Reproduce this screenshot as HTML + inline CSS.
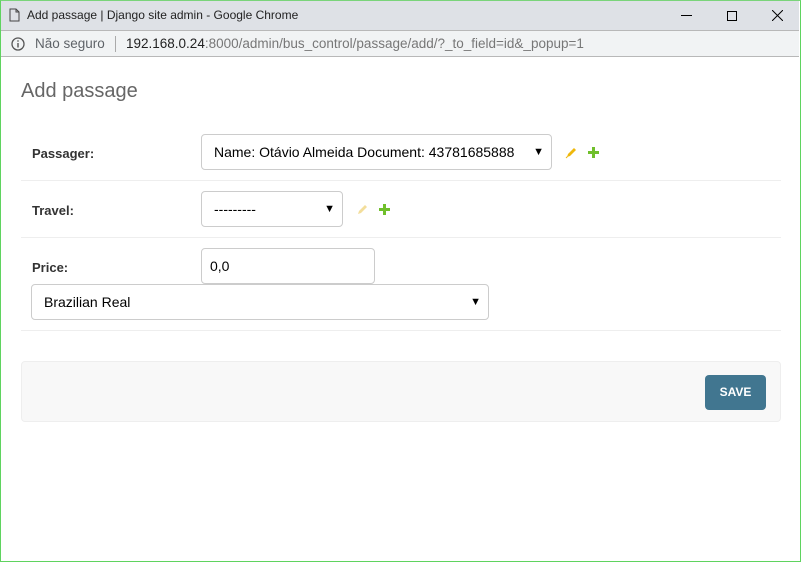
<!DOCTYPE html>
<html><head><meta charset="utf-8"><style>
*{box-sizing:border-box;margin:0;padding:0}
body{width:801px;height:562px;overflow:hidden;background:#fff;font-family:"Liberation Sans",sans-serif;position:relative}
.win{position:absolute;left:0;top:0;width:801px;height:562px;border:1px solid #5fd35f;border-top:1px solid #7ad47a}
.title{position:absolute;left:0;top:0;width:799px;height:30px;background:#dee1e6;font-size:12px;color:#222}
.addr{position:absolute;left:0;top:30px;width:799px;height:27px;background:#f1f3f4;border-top:1px solid #b8b8b8;border-bottom:1px solid #b8b8b8;font-size:13.5px}
.abs{position:absolute}
h1{position:absolute;left:21px;top:80px;font-size:20px;font-weight:300;color:#666}
.row{position:absolute;left:21px;width:760px;border-bottom:1px solid #eee}
.lbl{position:absolute;left:11px;font-size:13px;font-weight:bold;color:#333}
.sel{position:absolute;border:1px solid #ccc;border-radius:4px;background:#fff;font-size:14px;color:#000;padding-left:12px;display:flex;align-items:center}
.sel .ar{position:absolute;right:7px;font-size:11px}
.sub{position:absolute;left:21px;top:361px;width:760px;height:61px;background:#f8f8f8;border:1px solid #eee;border-radius:4px}
.btn{position:absolute;right:14px;top:13px;width:61px;height:35px;background:#417690;color:#fff;font-size:12px;font-weight:bold;border-radius:4px;text-align:center;line-height:35px}
</style></head><body>
<div class="title">
<svg class="abs" style="left:9px;top:8px" width="11" height="14"><path d="M1 1h6l3 3v9H1z M7 1v3h3" fill="none" stroke="#444"/></svg>
<span class="abs" style="left:27px;top:8px">Add passage | Django site admin - Google Chrome</span>
<div class="abs" style="left:681px;top:15px;width:11px;height:1px;background:#000"></div>
<div class="abs" style="left:727px;top:11px;width:10px;height:10px;border:1px solid #000"></div>
<svg class="abs" style="left:772px;top:10px" width="11" height="11"><path d="M0 0L11 11M11 0L0 11" stroke="#000"/></svg>
</div>
<div class="addr">
<svg class="abs" style="left:11px;top:6px" width="14" height="14"><circle cx="7" cy="7" r="6" fill="none" stroke="#555" stroke-width="1.3"/><rect x="6.3" y="6" width="1.4" height="4.5" fill="#555"/><rect x="6.3" y="3.3" width="1.4" height="1.4" fill="#555"/></svg>
<span class="abs" style="left:35px;top:5px;color:#5f6368">Não seguro</span>
<div class="abs" style="left:115px;top:5px;width:1px;height:16px;background:#aaa"></div>
<span class="abs" style="left:126px;top:5px;color:#222">192.168.0.24<span style="color:#777">:8000/admin/bus_control/passage/add/?_to_field=id&amp;_popup=1</span></span>
</div>
<h1>Add passage</h1>
<div class="row" style="top:124px;height:57px">
<div class="lbl" style="top:22px">Passager:</div>
<div class="sel" style="left:180px;top:10px;width:351px;height:36px">Name: Otávio Almeida Document: 43781685888<span class="ar">▼</span></div>
<svg class="abs" style="left:544px;top:22px" width="13" height="13"><path d="M2 11L3 8L9 2L11 4L5 10Z" fill="#efb80b"/><path d="M1 12L2.5 10.5" stroke="#efb80b"/></svg>
<svg class="abs" style="left:567px;top:23px" width="11" height="11"><path d="M4 0h3v4h4v3H7v4H4V7H0V4h4z" fill="#70bf2b"/></svg>
</div>
<div class="row" style="top:181px;height:57px">
<div class="lbl" style="top:22px">Travel:</div>
<div class="sel" style="left:180px;top:10px;width:142px;height:36px">---------<span class="ar">▼</span></div>
<svg class="abs" style="left:335px;top:22px" width="13" height="13"><path d="M2 11L3 8L9 2L11 4L5 10Z" fill="#f3de9b"/></svg>
<svg class="abs" style="left:358px;top:23px" width="11" height="11"><path d="M4 0h3v4h4v3H7v4H4V7H0V4h4z" fill="#70bf2b"/></svg>
</div>
<div class="row" style="top:238px;height:93px">
<div class="lbl" style="top:22px">Price:</div>
<div class="sel" style="left:180px;top:10px;width:174px;height:36px;padding-left:8px">0,0</div>
<div class="sel" style="left:10px;top:46px;width:458px;height:36px">Brazilian Real<span class="ar">▼</span></div>
</div>
<div class="sub"><div class="btn">SAVE</div></div>
<div class="win"></div>
</body></html>
